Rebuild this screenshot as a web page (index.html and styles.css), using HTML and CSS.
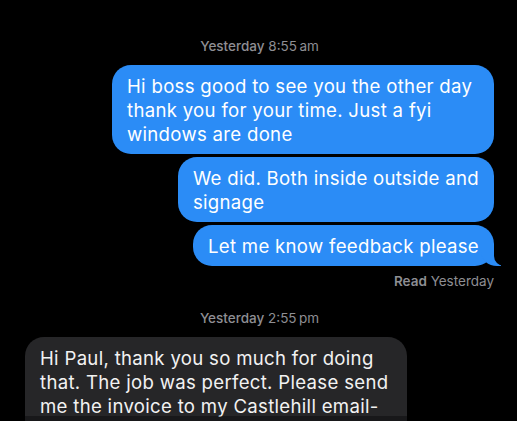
FILE: index.html
```
<!DOCTYPE html>
<html lang="en">
<head>
  <meta charset="UTF-8" />
  <meta name="viewport" content="width=device-width, initial-scale=1.0"/>
  <title>Messages</title>
  <link rel="stylesheet" href="styles.css">
</head>
<body>

  <div class="thread">
    <div class="stamp"><b>Yesterday</b> 8:55&#8239;am</div>

    <div class="message me">
      <div class="bubble long">Hi boss good to see you the other day<br>thank you for your time. Just a fyi<br>windows are done</div>
    </div>
    <div class="message me">
      <div class="bubble">We did. Both inside outside and<br>signage</div>
    </div>
    <div class="message me">
      <div class="bubble tail">Let me know feedback please</div>
    </div>
    <div class="receipt"><b>Read</b> Yesterday</div>

    <div class="stamp"><b>Yesterday</b> 2:55&#8239;pm</div>

    <div class="message them">
      <div class="bubble long">Hi Paul, thank you so much for doing<br>that. The job was perfect. Please send<br>me the invoice to my Castlehill email-</div>
    </div>
  </div>

  <div class="shade"></div>

</body>
</html>
```

FILE: styles.css
```
:root {
  --blue: #2b8cf6;
  --grey-bubble: #262628;
  --meta: #8e8e93;
}

* {
  margin: 0;
  padding: 0;
  box-sizing: border-box;
  font-family: 'Inter', 'Liberation Sans', sans-serif;
}

body {
  background: #000;
  height: 100vh;
  overflow: hidden;
  position: relative;
}

.thread {
  display: flex;
  flex-direction: column;
  padding: 38px 23px 0 25px;
}

.stamp {
  align-self: center;
  color: var(--meta);
  font-size: 13.5px;
  line-height: 16px;
  margin-bottom: 11px;
}

.stamp b {
  font-weight: 500;
}

.message {
  display: flex;
  margin-bottom: 3px;
}

.message.me {
  justify-content: flex-end;
}

.message.them {
  justify-content: flex-start;
}

.bubble {
  position: relative;
  padding: 9px 15px 8px;
  border-radius: 19px;
  font-size: 18.6px;
  letter-spacing: 0.3px;
  line-height: 24px;
  white-space: nowrap;
}

.bubble.long {
  width: 382px;
}

.message.me .bubble {
  background: var(--blue);
  color: #fff;
}

.message.them .bubble {
  background: var(--grey-bubble);
  color: #f2f2f2;
  padding-bottom: 20px;
}

/* little hook on the last sent bubble */
.tail::before,
.tail::after {
  content: "";
  position: absolute;
  bottom: 0;
  height: 22px;
}

.tail::before {
  right: -7px;
  width: 20px;
  background: var(--blue);
  border-bottom-left-radius: 16px 14px;
}

.tail::after {
  right: -26px;
  width: 26px;
  background: #000;
  border-bottom-left-radius: 10px;
}

.receipt {
  align-self: flex-end;
  margin-top: 4px;
  margin-bottom: 21px;
  color: var(--meta);
  font-size: 13.5px;
  line-height: 16px;
}

.receipt b {
  font-weight: 600;
}

.shade {
  position: absolute;
  left: 0;
  right: 0;
  bottom: 0;
  height: 5px;
  background: rgba(0, 0, 0, 0.35);
}
```
